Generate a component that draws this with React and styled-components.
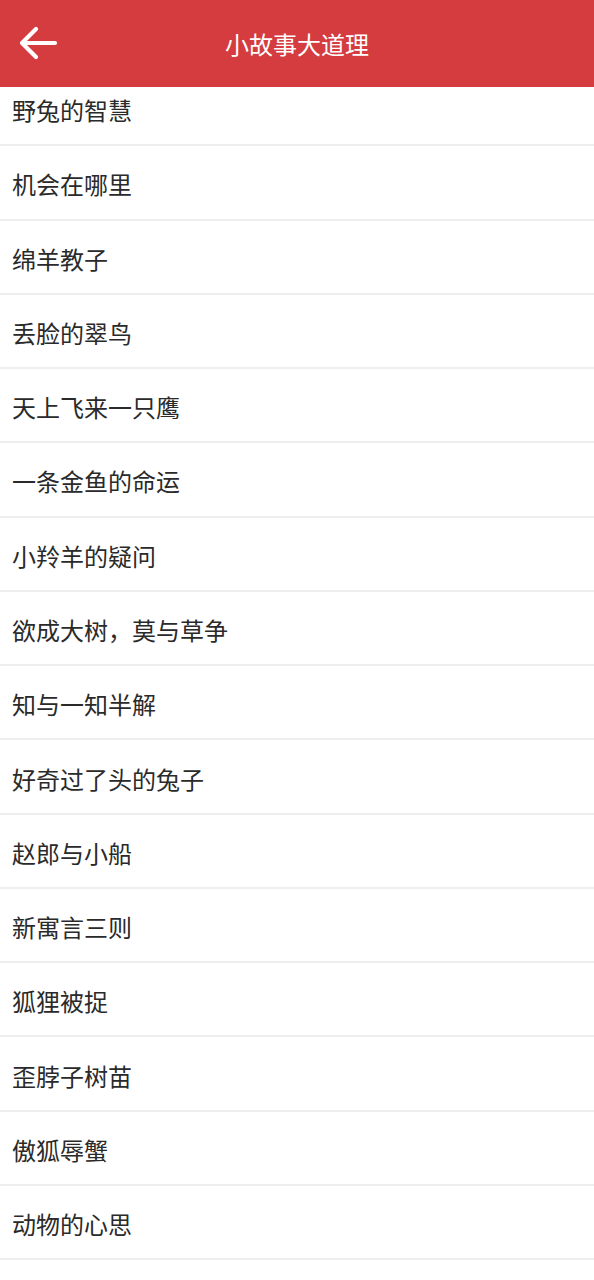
import React from 'react';
import styled, { createGlobalStyle } from 'styled-components';

const GlobalStyle = createGlobalStyle`
  html, body {
    margin: 0;
    padding: 0;
    background: #fff;
  }
  body {
    font-family: "Noto Sans CJK SC", "Noto Sans", sans-serif;
  }
`;

const Page = styled.div`
  display: flex;
  flex-direction: column;
  width: 100%;
  min-height: 1280px;
  background: #fff;
`;

const Header = styled.header`
  position: relative;
  z-index: 1;
  display: flex;
  align-items: center;
  justify-content: center;
  height: 87px;
  background: #d43c40;
  color: #fff;
`;

const BackButton = styled.button`
  position: absolute;
  left: 14px;
  top: 22px;
  width: 46px;
  height: 44px;
  padding: 0;
  border: none;
  background: transparent;
  display: flex;
  align-items: center;
  justify-content: center;
  cursor: pointer;
`;

const Title = styled.h1`
  margin: 0;
  font-size: 24px;
  font-weight: 400;
`;

const Viewport = styled.div`
  overflow: hidden;
`;

const List = styled.ul`
  list-style: none;
  margin: -15px 0 0;
  padding: 0;
`;

const Row = styled.li`
  display: flex;
  align-items: center;
  box-sizing: border-box;
  height: 74.27px;
  padding: 3px 12px 0;
  border-bottom: 2px solid #eeeeee;
  font-size: 24px;
  color: #2a2a2a;
  cursor: pointer;
`;

const stories = [
  '野兔的智慧',
  '机会在哪里',
  '绵羊教子',
  '丢脸的翠鸟',
  '天上飞来一只鹰',
  '一条金鱼的命运',
  '小羚羊的疑问',
  '欲成大树，莫与草争',
  '知与一知半解',
  '好奇过了头的兔子',
  '赵郎与小船',
  '新寓言三则',
  '狐狸被捉',
  '歪脖子树苗',
  '傲狐辱蟹',
  '动物的心思',
];

const App = () => {
  return (
    <Page>
      <GlobalStyle />
      <Header>
        <BackButton aria-label='返回'>
          <svg width='42' height='40' viewBox='0 0 42 40' fill='none'>
            <path
              d='M39 19H7M20 5L6 19l14 14'
              stroke='#fff'
              strokeWidth='4.2'
              strokeLinecap='round'
              strokeLinejoin='round'
            />
          </svg>
        </BackButton>
        <Title>小故事大道理</Title>
      </Header>
      <Viewport>
        <List>
          {stories.map((s) => (
            <Row key={s}>{s}</Row>
          ))}
        </List>
      </Viewport>
    </Page>
  );
};

export default App;
